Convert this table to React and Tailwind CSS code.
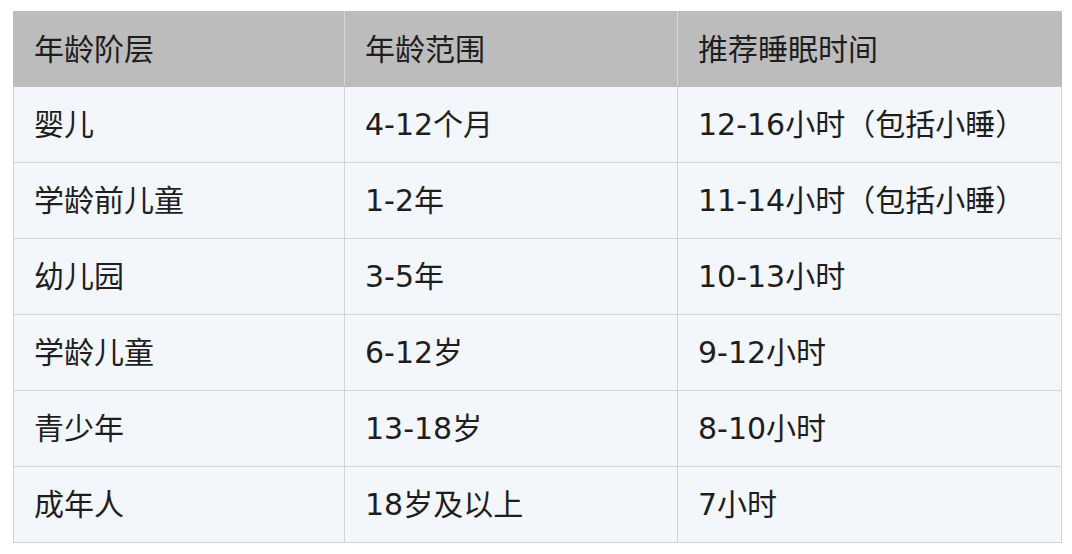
import React from 'react';

const rows = [
  ['婴儿', '4-12个月', '12-16小时（包括小睡）'],
  ['学龄前儿童', '1-2年', '11-14小时（包括小睡）'],
  ['幼儿园', '3-5年', '10-13小时'],
  ['学龄儿童', '6-12岁', '9-12小时'],
  ['青少年', '13-18岁', '8-10小时'],
  ['成年人', '18岁及以上', '7小时'],
];

export default function App() {
  return (
    <div
      className="w-[1072px] h-[554px] bg-white pt-[11px] pl-[13px]"
      style={{ fontFamily: '"DejaVu Sans", "Noto Sans CJK SC", sans-serif' }}
    >
      <table className="w-[1049px] border-collapse text-[30px] text-[#1e1e1e]">
        <colgroup>
          <col className="w-[331px]" />
          <col className="w-[333px]" />
          <col />
        </colgroup>
        <thead>
          <tr className="h-[75px] bg-[#bcbcbd]">
            <th className="border border-[#bcbcbd] border-r-[#d8d8d8] pl-[20px] text-left font-normal">年龄阶层</th>
            <th className="border border-[#bcbcbd] border-r-[#d8d8d8] pl-[20px] text-left font-normal">年龄范围</th>
            <th className="border border-[#bcbcbd] pl-[20px] text-left font-normal">推荐睡眠时间</th>
          </tr>
        </thead>
        <tbody>
          {rows.map((r) => (
            <tr key={r[0]} className="h-[76px] bg-[#f3f6fb]">
              {r.map((c, i) => (
                <td key={i} className="border border-[#d0d3d8] pl-[20px]">
                  {c}
                </td>
              ))}
            </tr>
          ))}
        </tbody>
      </table>
    </div>
  );
}
